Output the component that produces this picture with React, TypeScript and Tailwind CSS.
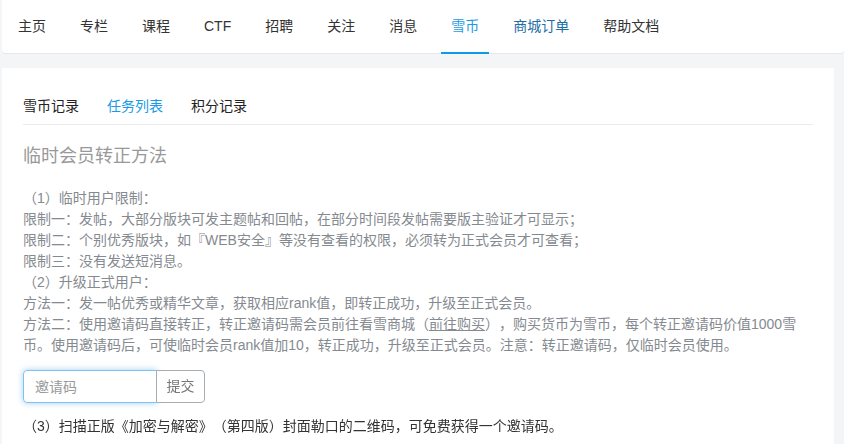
import React from 'react';

const navItems = ['主页', '专栏', '课程', 'CTF', '招聘', '关注', '消息', '雪币', '商城订单', '帮助文档'];
const subTabs = ['雪币记录', '任务列表', '积分记录'];

const font = "font-['Liberation_Sans','Noto_Sans_CJK_SC',sans-serif]";

export default function App() {
  return (
    <div className={`min-h-[444px] bg-[#f4f5f7] ${font} [text-spacing-trim:space-all] overflow-hidden`}>
      {/* top nav */}
      <nav className="ml-[2px] h-[54px] bg-white rounded-b-[4px] border-b border-[#e6e8eb] flex pl-[16px] gap-[34px]">
        {navItems.map((item) => {
          const active = item === '雪币';
          const color = active ? 'text-[#1a9be6]' : item === '商城订单' ? 'text-[#1c6ea4]' : 'text-[#333]';
          return (
            <a key={item} className={`relative h-full flex items-center pb-[1px] text-[14px] leading-[20px] ${color}`}>
              {item}
              {active && <span className="absolute left-[-10px] right-[-10px] bottom-[-1px] h-[2px] bg-[#0d9be8]" />}
            </a>
          );
        })}
      </nav>

      {/* card */}
      <div className="mt-[14px] ml-[2px] w-[832px] bg-white px-[21px] pb-[20px]">
        <div className="flex gap-[28px] pt-[27px] pb-[7px] border-b border-[#ebebeb] text-[14px] leading-[22px]">
          {subTabs.map((t) => (
            <span key={t} className={t === '任务列表' ? 'text-[#1a9be6]' : 'text-[#222]'}>
              {t}
            </span>
          ))}
        </div>

        <h2 className="mt-[19px] text-[18px] leading-[24px] font-normal text-[#999]">临时会员转正方法</h2>

        <div className="mt-[20px] text-[14px] leading-[21px] text-[#858a90]">
          <p>（1）临时用户限制：</p>
          <p>限制一：发帖，大部分版块可发主题帖和回帖，在部分时间段发帖需要版主验证才可显示；</p>
          <p>限制二：个别优秀版块，如『WEB安全』等没有查看的权限，必须转为正式会员才可查看；</p>
          <p>限制三：没有发送短消息。</p>
          <p>（2）升级正式用户：</p>
          <p>方法一：发一帖优秀或精华文章，获取相应rank值，即转正成功，升级至正式会员。</p>
          <p>
            方法二：使用邀请码直接转正，转正邀请码需会员前往看雪商城（<a className="underline">前往购买</a>），购买货币为雪币，每个转正邀请码价值1000雪币。使用邀请码后，可使临时会员rank值加10，转正成功，升级至正式会员。注意：转正邀请码，仅临时会员使用。
          </p>
        </div>

        <div className="mt-[14px] flex">
          <input
            autoFocus
            placeholder="邀请码"
            className="w-[134px] h-[33px] px-[11px] text-[14px] text-[#333] placeholder:text-[#999] border border-[#7cc3f2] rounded-l-[4px] shadow-[0_0_6px_rgba(102,175,233,0.6)] outline-none"
          />
          <button className="w-[49px] h-[33px] -ml-px text-[14px] text-[#777] bg-white border border-[#a8adb3] rounded-r-[4px]">
            提交
          </button>
        </div>

        <p className="mt-[13px] text-[14px] leading-[21px] text-[#333]">
          （3）扫描正版《加密与解密》（第四版）封面勒口的二维码，可免费获得一个邀请码。
        </p>
      </div>
    </div>
  );
}
